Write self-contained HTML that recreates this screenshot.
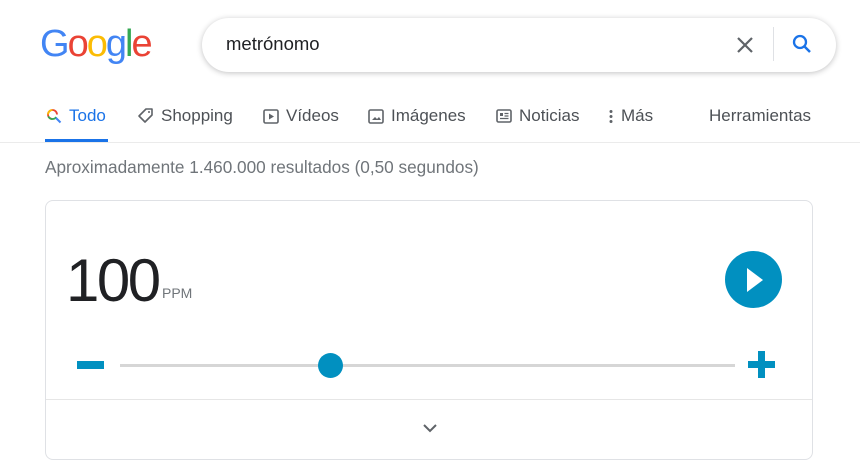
<!DOCTYPE html>
<html><head><meta charset="utf-8"><style>
*{margin:0;padding:0;box-sizing:border-box}
html,body{width:860px;height:444px}
body{background:#fff;font-family:"Liberation Sans",Arial,sans-serif;position:relative;overflow:hidden}
.abs{position:absolute}
.logo{left:40px;top:23px;font-size:38px;letter-spacing:-2px;font-weight:normal}
.box{left:202px;top:18px;width:634px;height:54px;border-radius:27px;box-shadow:0 1px 6px rgba(32,33,36,.28);background:#fff}
.tab{top:106px;font-size:17px;color:#4d5156;display:flex;align-items:center;gap:6px}
</style></head><body>
<div class="abs logo"><span style="color:#4285f4">G</span><span style="color:#ea4335">o</span><span style="color:#fbbc05">o</span><span style="color:#4285f4">g</span><span style="color:#34a853">l</span><span style="color:#ea4335">e</span></div>
<div class="abs box">
 <div class="abs" style="left:24px;top:15px;font-size:18.5px;color:#202124">metrónomo</div>
 <svg class="abs" style="left:533px;top:17px" width="20" height="20" viewBox="0 0 20 20"><path d="M3 3L17 17M17 3L3 17" stroke="#5f6368" stroke-width="2.2"/></svg>
 <div class="abs" style="left:571px;top:9px;width:1px;height:34px;background:#dfe1e5"></div>
 <svg class="abs" style="left:589px;top:15px" width="22" height="22" viewBox="0 0 22 22"><circle cx="9" cy="9" r="6" fill="none" stroke="#1a73e8" stroke-width="2.3"/><path d="M13.5 13.5L19 19" stroke="#1a73e8" stroke-width="2.5"/></svg>
</div>
<div class="abs tab" style="left:45px;color:#1a73e8"><svg width="18" height="18" viewBox="0 0 18 18"><path d="M12 7.5A4.5 4.5 0 1 0 7.5 12" fill="none" stroke="#ea4335" stroke-width="1.8"/><path d="M3.3 9.3A4.5 4.5 0 0 0 11.2 10" fill="none" stroke="#34a853" stroke-width="1.8"/><path d="M3 7.5A4.5 4.5 0 0 1 7.5 3" fill="none" stroke="#fbbc05" stroke-width="1.8"/><path d="M11 11L15.5 15.5" stroke="#4285f4" stroke-width="2"/></svg>Todo</div>
<div class="abs" style="left:45px;top:139px;width:63px;height:3px;background:#1a73e8"></div>
<div class="abs tab" style="left:137px"><svg width="18" height="18" viewBox="0 0 18 18"><path d="M9 2h6v6l-7 7-6-6z" fill="none" stroke="#5f6368" stroke-width="1.6" stroke-linejoin="round"/><circle cx="12" cy="5" r="1" fill="#5f6368"/></svg>Shopping</div>
<div class="abs tab" style="left:262px"><svg width="18" height="18" viewBox="0 0 18 18"><rect x="2" y="3" width="14" height="13" rx="1.5" fill="none" stroke="#5f6368" stroke-width="1.6"/><path d="M7 6.5v6l5-3z" fill="#5f6368"/></svg>Vídeos</div>
<div class="abs tab" style="left:367px"><svg width="18" height="18" viewBox="0 0 18 18"><rect x="2" y="3" width="14" height="13" rx="1.5" fill="none" stroke="#5f6368" stroke-width="1.6"/><path d="M5 13l3-3 2 2 2-2 2 3z" fill="#5f6368"/></svg>Imágenes</div>
<div class="abs tab" style="left:495px"><svg width="18" height="18" viewBox="0 0 18 18"><rect x="2" y="3" width="14" height="12" rx="1.5" fill="none" stroke="#5f6368" stroke-width="1.6"/><rect x="5" y="6" width="3" height="3" fill="#5f6368"/><path d="M9.5 6.5h4M9.5 9h4M5 11.5h8.5" stroke="#5f6368" stroke-width="1.3"/></svg>Noticias</div>
<div class="abs tab" style="left:607px"><svg width="8" height="18" viewBox="0 0 8 18"><circle cx="4" cy="4.5" r="1.5" fill="#5f6368"/><circle cx="4" cy="9.5" r="1.5" fill="#5f6368"/><circle cx="4" cy="14.5" r="1.5" fill="#5f6368"/></svg>Más</div>
<div class="abs tab" style="left:709px">Herramientas</div>
<div class="abs" style="left:0;top:142px;width:860px;height:1px;background:#ebebeb"></div>
<div class="abs" style="left:45px;top:157px;font-size:17.2px;color:#70757a">Aproximadamente 1.460.000 resultados (0,50 segundos)</div>
<div class="abs" style="left:45px;top:200px;width:768px;height:260px;border:1px solid #dfe1e5;border-radius:8px"></div>
<div class="abs" style="left:46px;top:399px;width:766px;height:1px;background:#e6e6e6"></div>
<div class="abs" style="left:66px;top:246px;font-size:60px;color:#202124;letter-spacing:-2.5px">100</div>
<div class="abs" style="left:162px;top:285px;font-size:14px;color:#70757a">PPM</div>
<div class="abs" style="left:725px;top:251px;width:57px;height:57px;border-radius:50%;background:#0190c0"></div>
<svg class="abs" style="left:745px;top:267px" width="20" height="26" viewBox="0 0 20 26"><path d="M2 1l16 12-16 12z" fill="#fff"/></svg>
<div class="abs" style="left:77px;top:361px;width:27px;height:8px;background:#0190c0"></div>
<div class="abs" style="left:120px;top:364px;width:615px;height:3px;background:#d6d6d6"></div>
<div class="abs" style="left:318px;top:353px;width:25px;height:25px;border-radius:50%;background:#0190c0"></div>
<div class="abs" style="left:748px;top:361px;width:27px;height:7px;background:#0190c0"></div>
<div class="abs" style="left:758px;top:351px;width:7px;height:27px;background:#0190c0"></div>
<svg class="abs" style="left:422px;top:422px" width="16" height="12" viewBox="0 0 16 12"><path d="M2 3l6 6 6-6" fill="none" stroke="#5f6368" stroke-width="2"/></svg>
</body></html>
